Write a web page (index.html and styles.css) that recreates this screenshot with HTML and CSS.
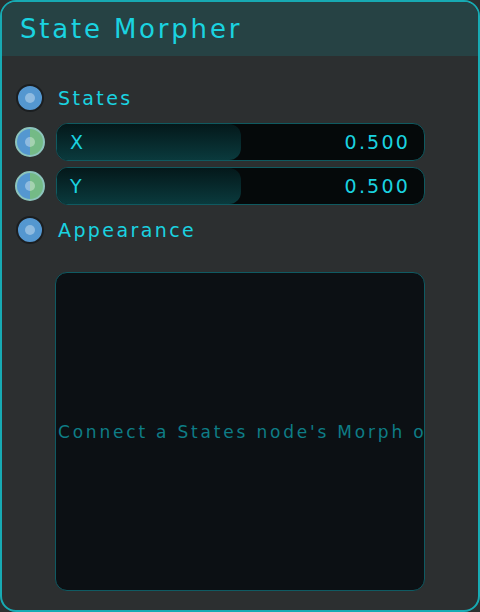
FILE: index.html
```html
<!DOCTYPE html>
<html>
<head>
<meta charset="utf-8">
<link rel="stylesheet" href="styles.css">
</head>
<body>
<div class="node">
  <div class="header"><span class="title">State Morpher</span></div>
  <div class="body">
    <div class="row">
      <span class="port-slot"><span class="port port-blue"><span class="dot"></span></span></span>
      <span class="label">States</span>
    </div>
    <div class="row">
      <span class="port-slot"><span class="port port-split"><span class="dot"></span></span></span>
      <div class="slider">
        <div class="fill" style="width: 50%"></div>
        <span class="s-name">X</span>
        <span class="s-value">0.500</span>
      </div>
    </div>
    <div class="row">
      <span class="port-slot"><span class="port port-split"><span class="dot"></span></span></span>
      <div class="slider">
        <div class="fill" style="width: 50%"></div>
        <span class="s-name">Y</span>
        <span class="s-value">0.500</span>
      </div>
    </div>
    <div class="row">
      <span class="port-slot"><span class="port port-blue"><span class="dot"></span></span></span>
      <span class="label">Appearance</span>
    </div>
    <div class="preview">
      <span class="hint">Connect a States node's Morph output</span>
    </div>
  </div>
</div>
</body>
</html>
```
FILE: styles.css
```css
* { box-sizing: border-box; }
html, body { margin: 0; padding: 0; background: #2c2f30; }
body { width: 480px; height: 612px; font-family: "DejaVu Sans", sans-serif; }
.node {
  width: 480px;
  height: 612px;
  border: 2px solid #17aab3;
  border-radius: 16px;
  background: #2c2f30;
  overflow: hidden;
  display: flex;
  flex-direction: column;
}
.header {
  height: 54px;
  background: #264244;
  display: flex;
  align-items: center;
  padding-left: 18px;
  flex: none;
}
.title {
  color: #1ad3e0;
  font-size: 26px;
  letter-spacing: 2.8px;
}
.body {
  flex: 1;
  display: flex;
  flex-direction: column;
  padding: 23px 53px 19px 13px;
  gap: 6px;
}
.row {
  display: flex;
  align-items: center;
  gap: 11px;
  height: 38px;
}
.port-slot {
  width: 30px;
  height: 30px;
  flex: none;
  display: flex;
  align-items: center;
  justify-content: center;
}
.port {
  width: 28px;
  height: 28px;
  border-radius: 50%;
  flex: none;
  display: flex;
  align-items: center;
  justify-content: center;
}
.port-blue {
  background: #5497d0;
  border: 2px solid #1b1e20;
}
.port-split {
  width: 30px;
  height: 30px;
  border: 2px solid #8cc4bc;
  background: linear-gradient(to right, #5497d0 50%, #74ba86 50%);
}
.dot {
  width: 10px;
  height: 10px;
  border-radius: 50%;
  background: rgba(255,255,255,0.35);
}
.label {
  color: #1ad3e0;
  font-size: 19px;
  letter-spacing: 2.4px;
  margin-left: 2px;
}
.slider {
  position: relative;
  flex: 1;
  height: 38px;
  border-radius: 12px;
  background: #05090a;
  border: 1px solid #0f5a60;
  overflow: hidden;
  display: flex;
  align-items: center;
  justify-content: space-between;
  padding: 0 14px 0 13px;
}
.fill {
  position: absolute;
  left: 0; top: 0; bottom: 0;
  border-radius: 0 12px 12px 0;
  background: linear-gradient(to bottom, #04181a, #0a3a3d);
}
.s-name, .s-value {
  position: relative;
  color: #1ad3e0;
  font-size: 19px;
  letter-spacing: 2.2px;
}
.preview {
  margin-top: 17px;
  margin-left: 40px;
  flex: 1;
  background: #0c1014;
  border: 1px solid #0f5a62;
  border-radius: 12px;
  overflow: hidden;
  display: flex;
  align-items: center;
  white-space: nowrap;
}
.hint {
  color: #0e7d86;
  font-size: 17px;
  letter-spacing: 2.8px;
  padding-left: 2px;
}
```
